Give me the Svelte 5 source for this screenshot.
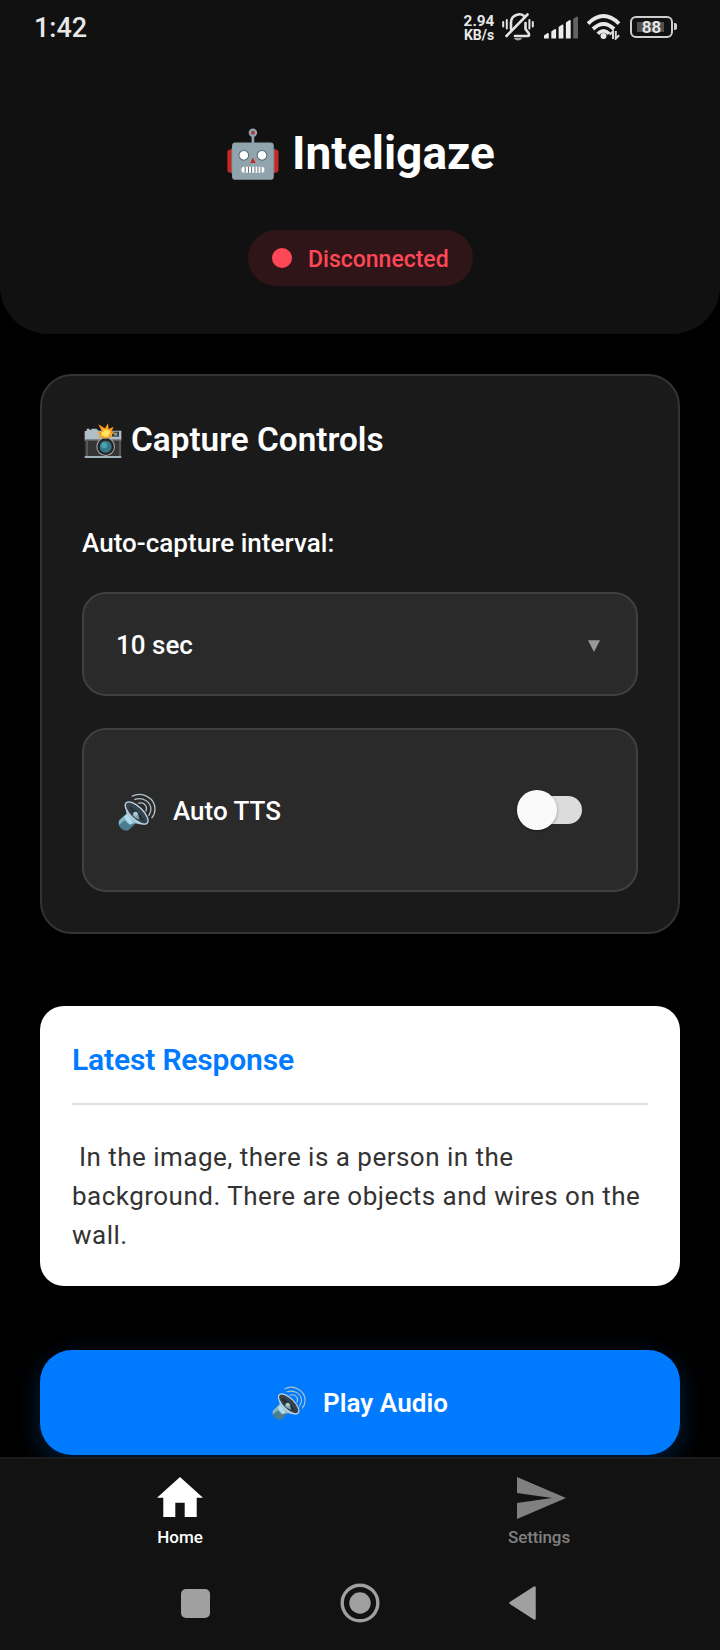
<script>
  let interval = $state('10 sec');
  let autoTts = $state(false);
  const response = ' In the image, there is a person in the background. There are objects and wires on the wall.';
  const bars = [
    { x: 0, h: 5.5 },
    { x: 7.3, h: 9.5 },
    { x: 14.6, h: 14 },
    { x: 21.9, h: 18.5 }
  ];
</script>

{#snippet speaker(size)}
  <svg width={size} height={size} viewBox="0 0 112 112" aria-hidden="true">
    <path d="M28 58 L4 80 Q-2 92 8 103 Q18 114 31 110 L52 90 Z" fill="#4b7c90" />
    <path d="M28 58 L4 80 Q0 86 3 94 L19 80 L31 92 L52 90 Z" fill="#82b4ca" />
    <path d="M22 28 Q22 52 27 66 Q38 84 54 90 Q70 95 86 91 Z" fill="#9cc6d8" />
    <path d="M27 62 L44 86 L36 94 L18 72 Z" fill="#b3dcec" />
    <ellipse cx="55" cy="59" rx="43" ry="18.5" transform="rotate(44 55 59)" fill="#34434d" stroke="#c0d6e4" stroke-width="4" />
    <path d="M32 38 Q56 48 79 83 Q58 78 42 60 Q32 48 32 38Z" fill="#26323a" />
    <path d="M43 67 L46 57 Q54 53 59 61 L63 78 Q52 76 43 67Z" fill="#83a9b9" />
    <circle cx="52" cy="61" r="6" fill="#a9ccd9" />
    <g fill="none" stroke="#b2c0c9" stroke-width="3.8" stroke-linecap="round">
      <path d="M42 9 C72 -6 109 16 109 47 C109 57 105 67 100 73" />
      <path d="M50 19 C75 11 97 27 97 48 C97 55 94 61 91 66" />
      <path d="M60 30 C74 26 85 35 84 47 L82 53" />
    </g>
  </svg>
{/snippet}

<div class="screen">
  <header>
    <div class="status">
      <span class="clock">1:42</span>
      <div class="rate"><b>2.94</b><b class="unit">KB/s</b></div>
      <svg class="bell" width="32" height="30" viewBox="0 0 32 30" aria-hidden="true">
        <g fill="none" stroke="#e4e4e4" stroke-width="2.6" stroke-linecap="round" stroke-linejoin="round">
          <path d="M9 17 V10.5 C9 1.5 21 .5 22.5 5" />
          <path d="M23.5 11 V17 L26.5 21 Q28 24 25.5 24 H13" />
          <path d="M4.5 24 L25.5 2.5" />
          <path d="M1.2 10 V14.5 M4.8 8 V16.5 M27.4 8 V16.5 M30.8 10 V14.5" stroke-width="2" />
        </g>
        <path d="M11.5 26 H20.5 Q16 31 11.5 26Z" fill="#a0a0a0" />
      </svg>
      <svg class="signal" width="34" height="23" viewBox="0 0 34 23" aria-hidden="true">
        {#each bars as b}
          <path d="M{b.x} 22.5 V{25 - b.h} L{b.x + 3.6} {22.5 - b.h} Q{b.x + 4.8} {22.3 - b.h} {b.x + 4.8} {23.7 - b.h} V22.5Z" fill="#ececec" />
        {/each}
        <path d="M29.2 22.5 V3 L32.8 .5 Q34 .3 34 1.7 V22.5Z" fill="#636363" />
      </svg>
      <svg class="wifi" width="34" height="26" viewBox="0 0 34 26" aria-hidden="true">
        <g fill="none" stroke="#e8e8e8" stroke-width="3.8">
          <path d="M1 9.6 Q16.5 -5.4 32 9.6" />
          <path d="M6 15 Q16.5 5 27 15" />
          <path d="M10.8 19.8 Q16.5 13.8 22.2 19.8" />
        </g>
        <circle cx="16.5" cy="21.9" r="3" fill="#e8e8e8" />
        <path d="M22.6 20.8 L26 17.4 V25 M28.8 17 V24.6 L32.2 21.2" fill="none" stroke="#d8d8d8" stroke-width="2" />
      </svg>
      <div class="battery"><span>88</span></div>
    </div>

    <h1>
      <svg width="52.5" height="52.5" viewBox="0 0 156 156" aria-hidden="true">
        <rect x="1" y="64" width="30" height="69" rx="9" fill="#c62828" />
        <rect x="123" y="64" width="30" height="69" rx="9" fill="#c62828" />
        <rect x="73" y="20" width="8" height="26" fill="#90a4ae" />
        <circle cx="77" cy="14" r="12.5" fill="#90a4ae" />
        <circle cx="77" cy="14" r="5.5" fill="#b5303a" />
        <rect x="15" y="43" width="124" height="111" rx="10" fill="#90a4ae" />
        <path d="M14 60 V135 M140 60 V135" stroke="#718b96" stroke-width="2" />
        <g fill="#fff" stroke="#546872" stroke-width="3">
          <circle cx="50" cy="81" r="14.5" />
          <circle cx="104" cy="81" r="14.5" />
        </g>
        <path d="M77 88 L85 104 H69Z" fill="#c62828" />
        <rect x="43" y="115" width="68" height="18" rx="8" fill="#fff" />
        <path d="M54 115V133M64 115V133M73 115V133M83 115V133M92 115V133M101 115V133" stroke="#626d75" stroke-width="3" />
      </svg>
      <span>Inteligaze</span>
    </h1>

    <div class="pill"><i></i><span>Disconnected</span></div>
  </header>

  <main>
    <section class="controls">
      <h2>
        <svg width="38" height="36" viewBox="0 0 114 108" aria-hidden="true">
          <path d="M2 24 H8 V17 H17 V21 H22 V17 H37 L44 23 H112 V53 H2Z" fill="#b0bec5" />
          <rect x="2" y="50" width="110" height="50" fill="#353535" />
          <path d="M9 54 V99 M108 52 V99" stroke="#77797a" stroke-width="3" />
          <rect x="2" y="50" width="110" height="3" fill="#65777f" />
          <rect x="2" y="99" width="110" height="6" fill="#9fb3bc" />
          <rect x="84" y="26" width="21" height="15" fill="#303b40" />
          <rect x="90" y="29" width="10" height="9" fill="#84969e" />
          <circle cx="65" cy="71" r="28" fill="#a9a9a9" />
          <circle cx="65" cy="71" r="25" fill="#242424" />
          <circle cx="65" cy="71" r="18" fill="#33788a" />
          <circle cx="61" cy="67" r="9" fill="#4da0b2" />
          <path d="M65 48 L55 42 L43 46 L49 36 L39 26 L54 26 L43 4 L63 16 L72 1 L74 18 L89 11 L83 25 L93 31 L81 34 L85 45 L74 41Z" fill="#f99a1c" />
          <path d="M64 43 L57 38 L51 39 L54 33 L51 28 L59 26 L57 18 L66 22 L70 16 L72 24 L80 21 L77 29 L81 32 L74 34 L75 39Z" fill="#ffe45c" />
        </svg>
        <span>Capture Controls</span>
      </h2>
      <div class="label">Auto-capture interval:</div>
      <button class="select">
        <span>{interval}</span>
        <svg width="12" height="12" viewBox="0 0 12 12" aria-hidden="true"><path d="M0 .3H12L6 12Z" fill="#999" /></svg>
      </button>
      <div class="tts">
        {@render speaker(38)}
        <span>Auto TTS</span>
        <button class="toggle" class:on={autoTts} onclick={() => (autoTts = !autoTts)} aria-label="Auto TTS"><i></i></button>
      </div>
    </section>

    <section class="response">
      <h3>Latest Response</h3>
      <p>{response}</p>
    </section>

    <button class="play">{@render speaker(34)}<span>Play Audio</span></button>
  </main>

  <footer>
    <nav class="tabs">
      <div class="tab active">
        <svg width="46" height="43" viewBox="0 0 46 43" aria-hidden="true"><path d="M23 0 L46 20.7 H39.7 V40 H27.7 V25.7 H18.3 V40 H6.3 V20.7 H0Z" fill="#fff" /></svg>
        <span>Home</span>
      </div>
      <div class="tab">
        <svg class="send" width="49" height="43" viewBox="0 0 49 43" aria-hidden="true"><path d="M0 0 L49 21 L0 42 V26 L35 21 L0 16Z" fill="#808080" /></svg>
        <span>Settings</span>
      </div>
    </nav>
    <div class="system">
      <svg width="29" height="29" viewBox="0 0 29 29" aria-hidden="true"><rect width="29" height="29" rx="5" fill="#a0a0a0" /></svg>
      <svg width="40" height="40" viewBox="0 0 40 40" aria-hidden="true"><circle cx="20" cy="20" r="17.8" fill="none" stroke="#a0a0a0" stroke-width="3.4" /><circle cx="20" cy="20" r="10.7" fill="#a0a0a0" /></svg>
      <svg width="27" height="34" viewBox="0 0 27 34" aria-hidden="true"><path d="M1.5 17 L25.5 1.5 V32.5Z" fill="#a0a0a0" stroke="#a0a0a0" stroke-width="2.5" stroke-linejoin="round" /></svg>
    </div>
  </footer>
</div>

<style>
  :global(body) { background: #000; }
  * { box-sizing: border-box; }
  svg { display: block; flex: none; }
  h1, h2, h3, p { margin: 0; }
  button { border: 0; margin: 0; font: inherit; color: inherit; }

  .screen {
    width: 720px;
    height: 1650px;
    display: flex;
    flex-direction: column;
    overflow: hidden;
    background: #000;
    color: #fff;
    font-family: Roboto, sans-serif;
    font-weight: 500;
    font-size: 26px;
    line-height: 30px;
  }

  header {
    height: 334px;
    flex: none;
    display: flex;
    flex-direction: column;
    align-items: center;
    background: #111;
    border-radius: 0 0 48px 48px;
  }
  .status {
    width: 100%;
    height: 56px;
    display: flex;
    align-items: center;
    padding: 0 43px 2px 34px;
    color: #e8e8e8;
  }
  .clock { font-size: 27px; flex: 1; padding-top: 1px; }
  .rate {
    display: flex;
    flex-direction: column;
    align-items: center;
    width: 32px;
    margin-right: 7px;
    padding-top: 2px;
    font-size: 15.3px;
    line-height: 14px;
  }
  .rate b { font-weight: 700; }
  .rate .unit { font-size: 14px; }
  .bell { margin-right: 10px; }
  .signal { margin-right: 9px; }
  .wifi { margin-right: 9px; }
  .battery {
    position: relative;
    width: 43px;
    height: 22px;
    border: 2px solid #cfcfcf;
    border-radius: 6px;
    display: grid;
    place-items: center;
    font-size: 17px;
    font-weight: 600;
    line-height: 18px;
    margin-right: 4px;
    background: linear-gradient(#505050, #505050) 5px 4px / 27px 10px no-repeat;
  }
  .battery::after {
    content: '';
    position: absolute;
    left: 42px;
    top: 5px;
    width: 3px;
    height: 7px;
    border-radius: 0 2px 2px 0;
    background: #cfcfcf;
  }

  h1 {
    display: flex;
    gap: 12.5px;
    align-items: center;
    height: 56px;
    margin-top: 70px;
    padding-left: 2px;
    font-size: 46px;
    font-weight: 700;
    line-height: 54px;
  }
  h1 span { padding-bottom: 2px; }
  .pill {
    display: flex;
    align-items: center;
    gap: 16.5px;
    width: 225px;
    height: 56px;
    margin-top: 48px;
    padding-left: 24px;
    border-radius: 28px;
    background: #2f1518;
    color: #ff4757;
    font-size: 23px;
  }
  .pill span { padding-top: 3px; }
  .pill i { width: 20px; height: 20px; border-radius: 50%; background: #ff4757; }

  main {
    flex: 1;
    min-height: 0;
    padding: 40px 40px 0;
    display: flex;
    flex-direction: column;
    overflow: hidden;
  }
  .controls {
    flex: none;
    height: 560px;
    padding: 44px 40px 40px;
    border: 2px solid #333;
    border-radius: 32px;
    background: #1a1a1a;
  }
  h2 {
    display: flex;
    align-items: center;
    gap: 9px;
    padding-left: 2px;
    font-size: 33.3px;
    font-weight: 600;
    line-height: 40px;
  }
  h2 svg { margin-top: 1px; }
  .label { margin: 68px 0 34px; letter-spacing: 0.04px; }
  .select, .tts {
    width: 100%;
    display: flex;
    align-items: center;
    border: 2px solid #404040;
    border-radius: 24px;
    background: #2a2a2a;
  }
  .select {
    height: 104px;
    justify-content: space-between;
    padding: 2px 36px 0 32px;
  }
  .select svg { margin-top: 2px; }
  .tts { height: 164px; margin-top: 32px; padding: 0 54px 0 34px; }
  .tts > :global(svg) { margin-top: 3px; }
  .tts span { flex: 1; margin-left: 17px; padding-top: 2px; }
  .toggle {
    position: relative;
    width: 65px;
    height: 40px;
    padding: 0;
    background: none;
    display: flex;
    align-items: center;
  }
  .toggle::before {
    content: '';
    width: 61px;
    height: 28px;
    margin-left: auto;
    border-radius: 14px;
    background: #dcdcdc;
  }
  .toggle i {
    position: absolute;
    left: 0;
    top: 0;
    width: 40px;
    height: 40px;
    border-radius: 50%;
    background: #fafafa;
    box-shadow: 0 1px 3px rgba(0, 0, 0, 0.35);
  }
  .toggle.on i { left: 25px; }

  .response {
    flex: none;
    height: 280px;
    margin-top: 72px;
    padding: 32px;
    border-radius: 24px;
    background: #fff;
    color: #333;
  }
  h3 {
    height: 67px;
    padding-top: 4px;
    border-bottom: 2px solid #e0e0e0;
    color: #007bff;
    font-size: 30px;
    font-weight: 600;
    letter-spacing: -0.16px;
    line-height: 36px;
  }
  p {
    margin-top: 33px;
    font-weight: 400;
    letter-spacing: 0.48px;
    line-height: 39px;
    white-space: pre-wrap;
  }

  .play {
    flex: none;
    display: flex;
    align-items: center;
    justify-content: center;
    gap: 17px;
    height: 105px;
    margin-top: 64px;
    padding: 0;
    border-radius: 32px;
    background: #007bff;
    box-shadow: 0 8px 24px rgba(0, 123, 255, 0.25);
    font-weight: 600;
    letter-spacing: 0.08px;
  }
  .play > :global(svg) { margin-top: 1px; }

  footer {
    flex: none;
    height: 193px;
    border-top: 2px solid #1c1c1e;
    background: #121212;
  }
  .tabs { display: grid; grid-template-columns: 1fr 1fr; padding-top: 18px; }
  .tab {
    display: flex;
    flex-direction: column;
    align-items: center;
    gap: 7px;
    color: #808080;
    font-size: 17px;
    line-height: 20px;
  }
  .tab:not(.active) span { padding-right: 2px; letter-spacing: -0.1px; }
  .tab.active { color: #fff; }
  .send { margin-left: 2px; }
  .system {
    display: flex;
    align-items: center;
    height: 40px;
    margin-top: 36px;
    padding-left: 181px;
  }
  .system svg:nth-child(2) { margin: 0 129px 0 130px; }
</style>
